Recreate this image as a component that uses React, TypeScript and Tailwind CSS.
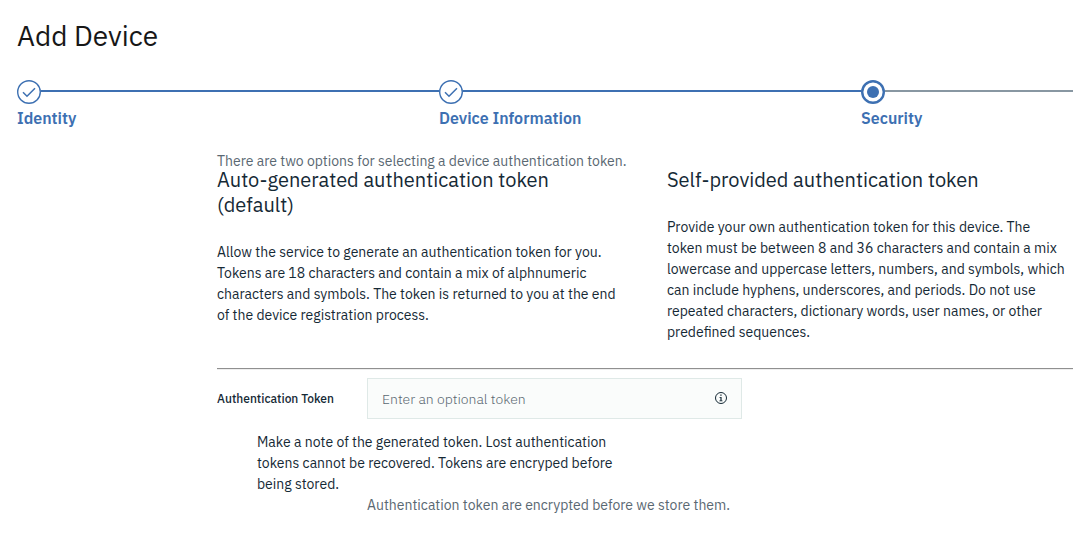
import { useId } from "react";

type StepState = "complete" | "current";

const steps: { label: string; state: StepState }[] = [
  { label: "Identity", state: "complete" },
  { label: "Device Information", state: "complete" },
  { label: "Security", state: "current" },
];

function StepIcon({ state }: { state: StepState }) {
  return (
    <svg viewBox="0 0 24 24" className="size-6 shrink-0" fill="none" aria-hidden="true">
      {state === "complete" ? (
        <>
          <circle cx="12" cy="12" r="11.3" fill="#ffffff" stroke="#3d70b2" strokeWidth="1.4" />
          <path d="M6 12.2 10 16.2 18 8.2" stroke="#3d70b2" strokeWidth="1.5" />
        </>
      ) : (
        <>
          <circle cx="12" cy="12" r="10.8" fill="#ffffff" stroke="#3d70b2" strokeWidth="2.4" />
          <circle cx="12" cy="12" r="6" fill="#3d70b2" />
        </>
      )}
    </svg>
  );
}

function Progress() {
  return (
    <ol className="mt-[26px] grid grid-cols-[2fr_2fr_1fr] pr-px pl-[17px]">
      {steps.map(({ label, state }) => (
        <li key={label} className="min-w-0" aria-current={state === "current" ? "step" : undefined}>
          <div className={state === "complete" ? "flex items-center" : "-mr-px flex items-center"}>
            <StepIcon state={state} />
            <span className={state === "complete" ? "mb-0.5 h-0.5 flex-1 bg-[#3d70b2]" : "mb-0.5 h-0.5 flex-1 bg-[#8897a2]"} />
          </div>
          <p className="mt-1 text-base leading-5 font-semibold text-[#3d70b2]">{label}</p>
        </li>
      ))}
    </ol>
  );
}

function TokenOption({ title, children }: { title: string; children: string }) {
  return (
    <section>
      <h2 className="text-xl leading-[25px] font-normal">{title}</h2>
      <p className="mt-[25px] text-sm leading-[21px]">{children}</p>
    </section>
  );
}

export default function App() {
  const tokenId = useId();
  return (
    <main className="overflow-hidden bg-white font-['IBM_Plex_Sans','Inter',sans-serif] text-[#152935]">
      <h1 className="pt-[18px] pl-[17px] text-[28px] leading-9 font-normal text-[#171717]">Add Device</h1>
      <Progress />

      <div className="mt-[25px] pl-[217px]">
        <p className="text-sm leading-4 text-[#5a6872]">
          There are two options for selecting a device authentication token.
        </p>
        <div className="-mt-0.5 grid grid-cols-[minmax(0,400px)_minmax(0,400px)] gap-[50px]">
          <TokenOption title="Auto-generated authentication token (default)">
            Allow the service to generate an authentication token for you. Tokens are 18 characters and contain a mix of
            alphnumeric characters and symbols. The token is returned to you at the end of the device registration
            process.
          </TokenOption>
          <TokenOption title="Self-provided authentication token">
            Provide your own authentication token for this device. The token must be between 8 and 36 characters and
            contain a mix lowercase and uppercase letters, numbers, and symbols, which can include hyphens, underscores,
            and periods. Do not use repeated characters, dictionary words, user names, or other predefined sequences.
          </TokenOption>
        </div>

        <hr className="mt-[25px] h-0.5 border-t border-b border-t-[#909090] border-b-[#eeeeee]" />

        <div className="mt-2 flex items-center">
          <label htmlFor={tokenId} className="w-[150px] text-xs leading-4 font-medium">
            Authentication Token
          </label>
          <div className="flex h-[41px] w-[375px] items-center border border-[#dfe9e7] bg-[#fafcfb] px-3.5">
            <input
              id={tokenId}
              type="text"
              placeholder="Enter an optional token"
              className="min-w-0 flex-1 bg-transparent text-sm font-light outline-none placeholder:text-[#5a6872]"
            />
            <button type="button" aria-label="Token information" className="mb-0.5 size-3">
              <svg viewBox="0 0 12 12" className="size-3" fill="none" aria-hidden="true">
                <circle cx="6" cy="6" r="5.5" stroke="#152935" strokeWidth="1" />
                <path d="M5.3 2.6h1.3v1.2H5.3zM4.5 5h2.1v3.4h.9v.8H4.4v-.8h1V5.8h-.9z" fill="#152935" />
              </svg>
            </button>
          </div>
        </div>

        <p className="mt-[13px] ml-10 w-[370px] text-sm leading-[21px]">
          Make a note of the generated token. Lost authentication tokens cannot be recovered. Tokens are encryped before
          being stored.
        </p>
        <p className="ml-[150px] text-sm leading-[21px] text-[#5a6872]">
          Authentication token are encrypted before we store them.
        </p>
      </div>
    </main>
  );
}
